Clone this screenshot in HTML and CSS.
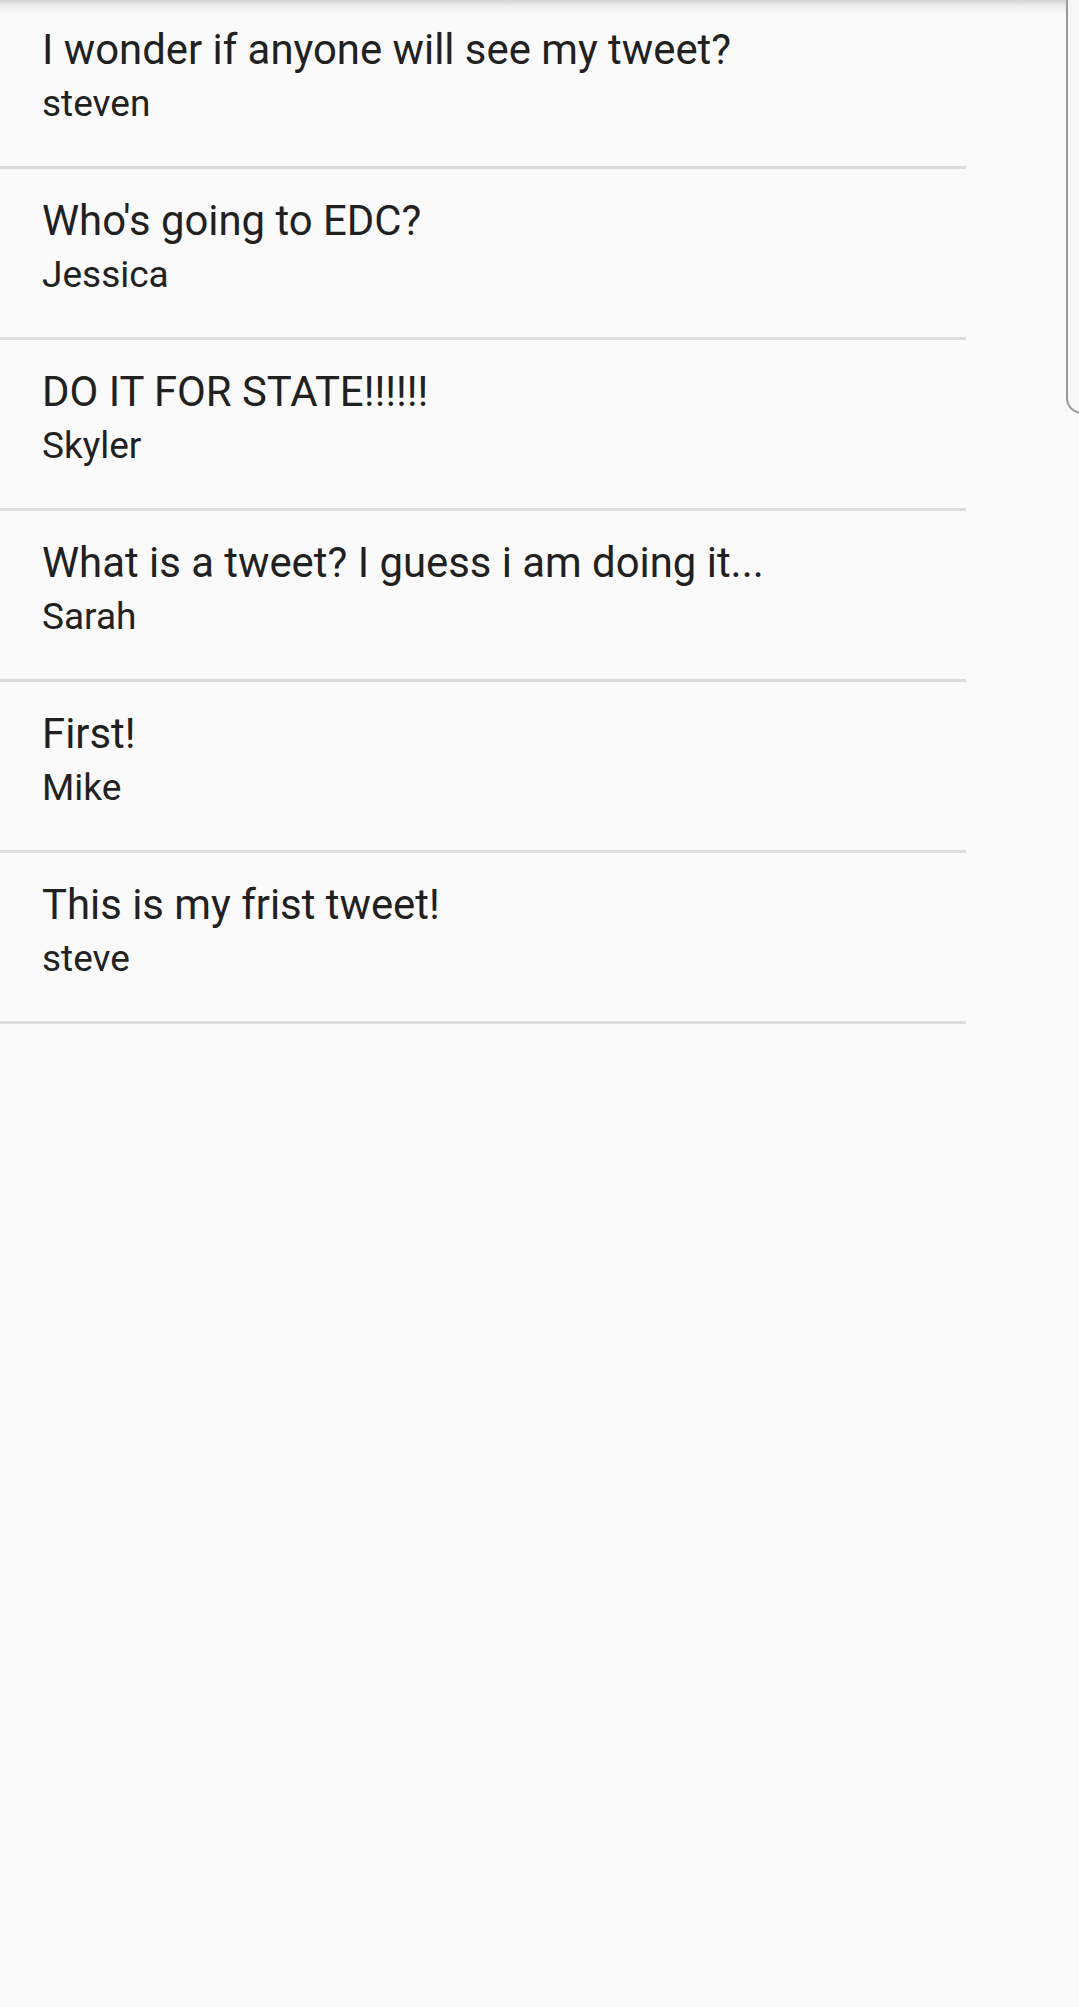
FILE: index.html
```html
<!DOCTYPE html>
<html>
<head>
<meta charset="utf-8">
<link rel="stylesheet" href="styles.css">
</head>
<body>
<div class="screen">
  <div class="top-shadow"></div>
  <div class="edge-handle"></div>
  <ul class="tweets">
    <li class="tweet"><div class="tweet-text">I wonder if anyone will see my tweet?</div><div class="tweet-user">steven</div></li>
    <li class="tweet"><div class="tweet-text">Who's going to EDC?</div><div class="tweet-user">Jessica</div></li>
    <li class="tweet"><div class="tweet-text">DO IT FOR STATE!!!!!!</div><div class="tweet-user">Skyler</div></li>
    <li class="tweet"><div class="tweet-text">What is a tweet? I guess i am doing it...</div><div class="tweet-user">Sarah</div></li>
    <li class="tweet"><div class="tweet-text">First!</div><div class="tweet-user">Mike</div></li>
    <li class="tweet"><div class="tweet-text">This is my frist tweet!</div><div class="tweet-user">steve</div></li>
  </ul>
</div>
</body>
</html>
```
FILE: styles.css
```css
html, body {
  margin: 0;
  padding: 0;
  background: #fafafa;
}
.screen {
  position: relative;
  width: 1079px;
  height: 2007px;
  overflow: hidden;
  background: #fafafa;
  font-family: Roboto, "Noto Sans", sans-serif;
  color: #212121;
}
.top-shadow {
  position: absolute;
  left: 0;
  top: 0;
  width: 1067px;
  height: 14px;
  background: linear-gradient(to bottom, rgba(0,0,0,0.16), rgba(0,0,0,0.05) 45%, rgba(0,0,0,0));
  z-index: 2;
}
.edge-handle {
  position: absolute;
  left: 1066px;
  top: -20px;
  width: 30px;
  height: 432px;
  border-left: 2px solid #9a9a9a;
  border-bottom: 2px solid #9a9a9a;
  border-bottom-left-radius: 16px;
  background: #f6f6f6;
  z-index: 3;
}
.tweets {
  list-style: none;
  margin: -2px 0 0 0;
  padding: 0;
  width: 966px;
}
.tweet {
  height: 168px;
  border-bottom: 3px solid #dcdcdc;
  padding: 0 0 0 42px;
  box-sizing: content-box;
  display: flex;
  flex-direction: column;
}
.tweet-text {
  font-size: 41.85px;
  line-height: 54px;
  margin-top: 25px;
}
.tweet-user {
  font-size: 37px;
  line-height: 50px;
  margin-top: 2px;
}
```
